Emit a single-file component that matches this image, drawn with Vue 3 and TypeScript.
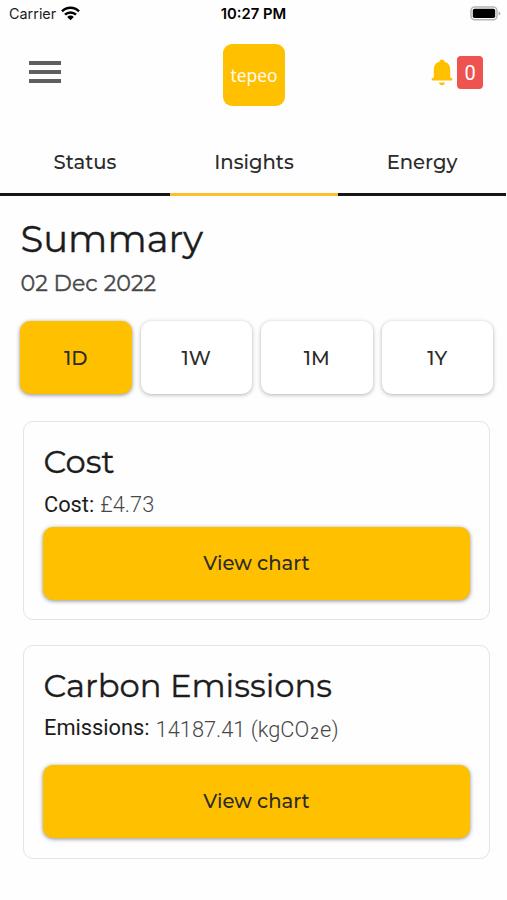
<script setup lang="ts">
import { ref } from 'vue'

interface Card {
  id: string
  title: string
  label: string
}

const tabs: string[] = ['Status', 'Insights', 'Energy']
const ranges: string[] = ['1D', '1W', '1M', '1Y']
const cards: Card[] = [
  { id: 'cost', title: 'Cost', label: 'Cost:' },
  { id: 'carbon', title: 'Carbon Emissions', label: 'Emissions:' },
]
const activeTab = ref('Insights')
const activeRange = ref('1D')
</script>

<template>
  <div class="app">
    <div class="statusbar">
      <div class="carrier">
        <span>Carrier</span>
        <svg width="19" height="15" viewBox="0 0 19 15">
          <g fill="none" stroke="#000" stroke-width="2.5">
            <path d="M1 5.4a12 12 0 0 1 17 0" />
            <path d="M4 8.7a7.7 7.7 0 0 1 11 0" />
          </g>
          <path d="M9.5 14.3 6.2 10.9a4.7 4.7 0 0 1 6.6 0Z" />
        </svg>
      </div>
      <div class="clock">10:27 PM</div>
      <div class="battery">
        <svg width="31" height="15" viewBox="0 0 31 15">
          <rect x="1" y="1" width="26" height="12.8" rx="3.8" fill="#fff" stroke="#b5b5b5" stroke-width="1.5" />
          <rect x="2.8" y="2.8" width="22.4" height="9.2" rx="1.8" />
          <path d="M28.6 5.2q1.8.8 1.8 2.2t-1.8 2.2z" fill="#aaa" />
        </svg>
      </div>
    </div>

    <header class="header">
      <button class="menu" aria-label="Menu"><i></i><i></i><i></i></button>
      <div class="logo">tepeo</div>
      <div class="alerts">
        <svg width="22" height="27" viewBox="0 0 22 27" fill="#ffc000">
          <path d="M11 .5c1.4 0 2.4.8 2.5 2.2 3.7.9 5.7 3.8 5.7 7.7v7.8l1.7 1c1 .6.6 2.3-.6 2.3H1.7c-1.2 0-1.6-1.7-.6-2.3l1.7-1v-7.800c0-3.900 2-6.800 5.700-7.700C8.600 1.300 9.600.5 11 .5Z" />
          <path d="M8 23.600h6c-.2 1.600-1.400 2.700-3 2.700s-2.800-1.100-3-2.700Z" />
        </svg>
        <span class="badge">0</span>
      </div>
    </header>

    <nav class="tabs">
      <button
        v-for="tab in tabs"
        :key="tab"
        class="tab"
        :class="{ active: tab === activeTab }"
        @click="activeTab = tab"
      >{{ tab }}</button>
    </nav>

    <main class="content">
      <h1 class="heading">Summary</h1>
      <p class="date">02 Dec 2022</p>

      <div class="ranges">
        <button
          v-for="range in ranges"
          :key="range"
          class="range"
          :class="{ active: range === activeRange }"
          @click="activeRange = range"
        >{{ range }}</button>
      </div>

      <section v-for="card in cards" :key="card.id" class="card" :class="card.id">
        <h2 class="title">{{ card.title }}</h2>
        <p class="metric">
          <span class="label">{{ card.label }}</span>
          <span v-if="card.id === 'cost'" class="value">£4.73</span>
          <span v-else class="value">14187.41 (kgCO<sub>2</sub>e)</span>
        </p>
        <button class="chart">View chart</button>
      </section>
    </main>
  </div>
</template>

<style>
body {
  background: #fefefe;
}
</style>

<style scoped>
.app {
  width: 507px;
  height: 900px;
  overflow: hidden;
  color: #1c1c1c;
  font-family: Montserrat, Inter, sans-serif;
}
button {
  border: 0;
  padding: 0;
  background: none;
  color: #2b2b2b;
  font: inherit;
  font-weight: 500;
}
h1, h2, p {
  margin: 0;
  font-weight: 400;
}
.heading, .title, .date {
  -webkit-text-stroke: 0.35px currentColor;
}
.statusbar {
  display: grid;
  grid-template-columns: 1fr auto 1fr;
  align-items: center;
  height: 28px;
  padding: 0 6px 0 9px;
  font-family: Inter, sans-serif;
  font-size: 14.4px;
}
.carrier {
  display: flex;
  align-items: center;
  gap: 5px;
}
.carrier span {
  margin-top: -1px;
}
.carrier svg {
  margin-top: -2px;
}
.clock {
  margin: -1px 3px 0 0;
  font-weight: 600;
  font-size: 14.8px;
  color: #000;
}
.battery {
  display: flex;
  justify-content: flex-end;
  margin-top: -2px;
}
.header {
  display: grid;
  grid-template-columns: 194px 62px 1fr;
  height: 86px;
  box-sizing: border-box;
  padding: 16px 24px 0 29px;
  align-items: start;
}
.menu {
  display: flex;
  flex-direction: column;
  gap: 5px;
  width: 32px;
  margin-top: 17px;
}
.menu i {
  height: 4px;
  background: #5e5e5e;
}
.logo {
  height: 62px;
  border-radius: 9px;
  background: #ffc000;
  color: #fffaf0;
  font: 17.4px/62px "Noto Sans", sans-serif;
  text-align: center;
}
.alerts {
  display: flex;
  justify-content: flex-end;
  gap: 4px;
  padding-top: 12px;
}
.alerts svg {
  margin-top: 3px;
}
.badge {
  width: 26px;
  height: 33px;
  border-radius: 4px;
  background: #ef5350;
  color: #fff;
  font: 20px/34px Roboto, sans-serif;
  text-align: center;
}
.tabs {
  display: grid;
  grid-template-columns: 170px 168px 168px;
  height: 66px;
  margin-top: 16px;
}
.tab {
  padding-top: 1px;
  border-bottom: 3px solid #161616;
  font-size: 19.6px;
}
.tab.active {
  border-color: #fbc02d;
}
.content {
  padding: 20px 17px 0 20px;
}
.heading {
  height: 46px;
  padding-left: 0.5px;
  font-size: 37px;
  line-height: 46px;
}
.date {
  height: 28px;
  margin-top: 8px;
  padding-left: 0.5px;
  color: #484848;
  font-size: 22.2px;
  line-height: 28px;
}
.ranges {
  display: grid;
  grid-template-columns: repeat(4, 111.5px);
  gap: 9px;
  margin-top: 23px;
}
.range, .chart {
  height: 73px;
  border-radius: 10px;
  background: #fff;
  box-shadow: 0 1px 4px rgba(0, 0, 0, 0.3);
  font-size: 19.6px;
}
.active.range, .chart {
  background: #ffc000;
  box-shadow: 0 1px 4px rgba(0, 0, 0, 0.45);
}
.card {
  width: 467px;
  height: 199px;
  box-sizing: border-box;
  margin: 27px 0 0 3px;
  padding: 19px 19px 0;
  border: 1px solid #e4e4e4;
  border-radius: 10px;
}
.carbon {
  height: 214px;
  margin-top: 25px;
}
.title {
  height: 42px;
  padding-left: 0.5px;
  font-size: 32.2px;
  line-height: 42px;
}
.metric {
  display: flex;
  gap: 6px;
  height: 30px;
  margin-top: 7px;
  padding-left: 1px;
  font: 21.8px/30px Roboto, sans-serif;
}
.value {
  color: #484848;
  font-weight: 300;
}
.value sub {
  position: relative;
  top: 2px;
  padding: 0 1px;
  font: 15.5px/0 "Noto Sans", sans-serif;
  vertical-align: baseline;
}
.carbon .metric {
  margin-top: 6px;
}
.carbon .value {
  padding-top: 2px;
}
.chart {
  display: block;
  width: 427px;
  margin-top: 7px;
  padding-bottom: 1px;
}
.carbon .chart {
  margin-top: 22px;
}
</style>
